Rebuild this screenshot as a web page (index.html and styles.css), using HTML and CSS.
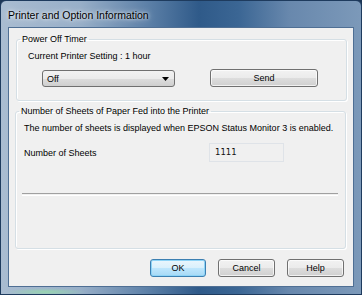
FILE: index.html
```html
<!DOCTYPE html>
<html>
<head>
<meta charset="utf-8">
<link rel="stylesheet" href="styles.css">
</head>
<body>
<div class="window">
  <div class="titlebar"><span class="title">Printer and Option Information</span></div>
  <div class="client">
    <fieldset class="group g1">
      <legend>Power Off Timer</legend>
      <div class="setting">Current Printer Setting : 1 hour</div>
      <div class="row">
        <div class="combo"><span>Off</span><svg class="arrow" width="7" height="4" viewBox="0 0 7 4"><path d="M0 0H7L3.5 4Z" fill="#000"/></svg></div>
        <button class="btn send">Send</button>
      </div>
    </fieldset>
    <fieldset class="group g2">
      <legend>Number of Sheets of Paper Fed into the Printer</legend>
      <div class="note">The number of sheets is displayed when EPSON Status Monitor 3 is enabled.</div>
      <div class="sheets">
        <span class="lbl">Number of Sheets</span>
        <div class="field">1111</div>
      </div>
      <div class="sep"></div>
    </fieldset>
    <div class="buttons">
      <button class="btn ok">OK</button>
      <button class="btn">Cancel</button>
      <button class="btn">Help</button>
    </div>
  </div>
</div>
</body>
</html>
```
FILE: styles.css
```css
html, body {
  margin: 0;
  padding: 0;
}
body {
  width: 362px;
  height: 295px;
  overflow: hidden;
  background: #1c3656;
  font-family: "Liberation Sans", Arial, sans-serif;
  font-size: 9px;
  color: #000;
}
.window {
  box-sizing: border-box;
  width: 362px;
  height: 295px;
  display: flex;
  flex-direction: column;
  padding: 0 7px 7px 7px;
  border: 1px solid #1e3b5e;
  border-radius: 6px 6px 0 0;
  background:
    radial-gradient(ellipse 40px 4px at 45px 291px, rgba(150, 220, 170, 0.8), rgba(150, 220, 170, 0) 100%),
    linear-gradient(90deg, #a9bcd1 0%, #98afc8 22%, #5f82a9 40%, #2f5a89 55%, #3b6694 66%, #6888ad 80%, #7c99b9 100%);
}
.titlebar {
  height: 26px;
  display: flex;
  align-items: center;
  flex: none;
}
.title {
  font-size: 10.5px;
  color: #000;
  padding-top: 1px;
  text-shadow: 0 0 6px rgba(255, 255, 255, 0.9), 0 0 3px rgba(255, 255, 255, 0.7);
}
.client {
  flex: 1;
  background: #f0f0f0;
  border: 1px solid #4f6f94;
  box-shadow: inset 0 0 0 0 #fff;
  display: flex;
  flex-direction: column;
  padding: 5px 0 0 0;
}
.group {
  margin: 0;
  padding: 0;
  border: 1px solid #d5dfe5;
  border-radius: 3px;
  box-shadow: inset 1px 1px 0 #fff, 1px 1px 0 #fff;
  min-width: 0;
}
.group legend {
  padding: 0 2px;
  margin-left: 3px;
  line-height: 12px;
  color: #000;
}
.g1 {
  margin-left: 7px;
  width: 331px;
  height: 68px;
  box-sizing: border-box;
}
.setting {
  margin: 6px 0 0 11px;
  line-height: 11px;
}
.row {
  display: flex;
  align-items: flex-end;
  margin-top: 7px;
}
.combo {
  box-sizing: border-box;
  margin-left: 25px;
  width: 133px;
  height: 17px;
  border: 1px solid #707070;
  border-radius: 3px;
  background: linear-gradient(#f2f2f2 0%, #ebebeb 50%, #dddddd 51%, #cfcfcf 100%);
  display: flex;
  align-items: center;
  justify-content: space-between;
  padding: 0 5px 0 4px;
}
.btn {
  box-sizing: border-box;
  height: 18px;
  border: 1px solid #707070;
  border-radius: 3px;
  background: linear-gradient(#f2f2f2 0%, #ebebeb 50%, #dddddd 51%, #cfcfcf 100%);
  box-shadow: inset 0 0 0 1px rgba(255, 255, 255, 0.7);
  font-family: "Liberation Sans", Arial, sans-serif;
  font-size: 9px;
  color: #000;
  padding: 0;
  width: 57px;
}
.send {
  margin-left: 35px;
  width: 108px;
}
.g2 {
  margin-top: 4px;
  margin-left: 6px;
  width: 331px;
  height: 144px;
  box-sizing: border-box;
}
.note {
  margin: 6px 0 0 8px;
  line-height: 11px;
}
.sheets {
  display: flex;
  align-items: center;
  margin-top: 9px;
}
.lbl {
  margin-left: 8px;
  width: 185px;
}
.field {
  box-sizing: border-box;
  width: 75px;
  height: 19px;
  border: 1px solid #dfe3e8;
  background: #f0f0f0;
  font-family: "DejaVu Sans", sans-serif;
  font-size: 8.5px;
  line-height: 17px;
  padding-left: 5px;
  color: #111;
}
.sep {
  margin: 31px 0 0 6px;
  width: 316px;
  height: 1px;
  border-top: 1px solid #a0a0a0;
  border-bottom: 1px solid #fff;
}
.buttons {
  display: flex;
  justify-content: flex-end;
  gap: 12px;
  margin: 10px 9px 0 0;
}
.ok {
  width: 56px;
  border-color: #3c7fb1;
  background: linear-gradient(#eaf6fd 0%, #d9f0fc 50%, #bee6fd 51%, #a7d9f5 100%);
  box-shadow: inset 0 0 0 1px #8ed4f7;
}
```
